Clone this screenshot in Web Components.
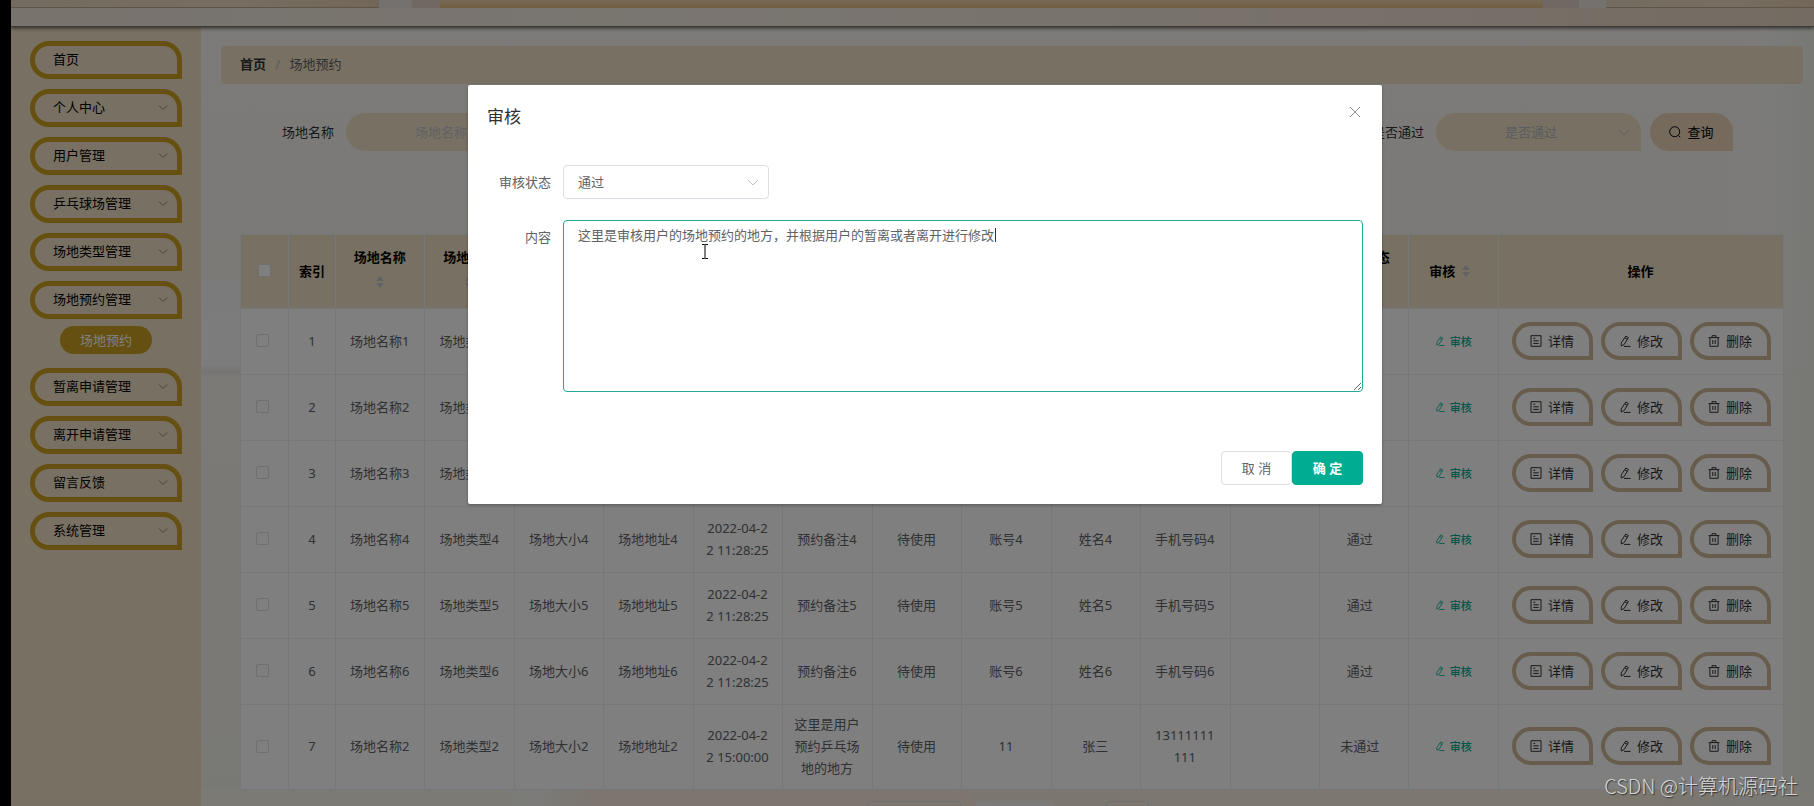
<!DOCTYPE html>
<html lang="zh-CN">
<head>
<meta charset="utf-8">
<title>场地预约</title>
<style>
html, body { height: 100%; margin: 0; }
body { background: #000; color: #606266; overflow: hidden; font: 13px/22px "Noto Sans", "Noto Sans CJK SC", sans-serif; }
</style>
</head>
<body>
<venue-app></venue-app>
<script>
const define = (name, html, init) => {
  const tpl = document.createElement('template');
  tpl.innerHTML = html;
  customElements.define(name, class extends HTMLElement {
    constructor() { super(); this.attachShadow({ mode: 'open' }).append(tpl.content.cloneNode(true)); }
    connectedCallback() { if (init) init(this, this.shadowRoot); }
  });
};

const icons = {
  down: '<path d="M1 4l5 5 5-5"/>',
  close: '<path d="M1 1l10 10M11 1L1 11"/>',
  search: '<circle cx="5.7" cy="5.7" r="5"/><path d="M9.6 9.6l1.6 1.7"/>',
  doc: '<path d="M1 .7h10v10.6H1zM3.3 3.3h2M3.3 5.8h5.4M3.3 8.4h5.4"/>',
  edit: '<path d="M6.8 1.1l2.6 1.4-4.2 7L2.3 11l-.1-3.1zM5.8 2.9l2.5 1.4M5 11.4h6.500"/>',
  trash: '<path d="M.6 2.6h10.8M4 2.4V.7h4v1.7M1.9 2.8v8.5h8.2V2.8M4.8 5v4M7.2 5v4"/>'
};
define('ui-icon', `<style>:host{display:inline-flex;width:12px;height:12px;flex:none}
svg{width:100%;height:100%;fill:none;stroke:currentColor;stroke-width:1}</style>
<svg viewBox="0 0 12 12" aria-hidden="true"></svg>`, (el, r) => {
  r.querySelector('svg').innerHTML = icons[el.getAttribute('name')];
});

define('app-header', `<style>
:host{display:block;position:relative;z-index:1;box-shadow:0 1px 4px #000a;border-bottom:1px solid #7c766c}
.band{display:grid;grid-template-columns:368px 33px 28px 1fr 36px 27px 208px;height:8px}
.wood{background:linear-gradient(90deg,#e8d8c0,#efdcc2 60%,#e4cdb0);border-bottom:1px solid #bcab94}
.glass{background:#e8e2dd}.fade{background:#e0d2c2}
.gold{background:linear-gradient(#ecd2ac,#e6bf83)}
.rail{height:18px;background:linear-gradient(90deg,#f0e6da,#f4ebe0 40%,#efe2d4 75%,#e9d8c4)}
</style><div class="band"><div class="wood"></div><div class="glass"></div><div class="fade"></div><div class="gold"></div><div class="fade"></div><div class="glass"></div><div class="wood"></div></div><div class="rail"></div>`);

define('menu-item', `<style>
:host{display:block}
button{display:flex;align-items:center;justify-content:space-between;box-sizing:border-box;width:100%;height:38px;
padding:0 9px 2px 18px;border:5px solid #caa022;border-radius:19px 19px 0 19px;background:none;font:inherit;color:#000}
ui-icon{color:#807a70;width:10px;height:10px}
:host([plain]) ui-icon{display:none}
</style><button type="button"><slot></slot><ui-icon name="down"></ui-icon></button>`);

define('side-menu', `<style>
:host{display:block;background:#f0e1c5;padding:14px 19px}
nav{display:flex;flex-direction:column;gap:10px}
a{align-self:center;margin:-3px 0 4px;padding:3px 20px;border-radius:14px;background:#caa022;color:#fff;text-decoration:none}
</style><nav>
<menu-item plain>首页</menu-item><menu-item>个人中心</menu-item><menu-item>用户管理</menu-item>
<menu-item>乒乓球场管理</menu-item><menu-item>场地类型管理</menu-item><menu-item>场地预约管理</menu-item>
<a href="#">场地预约</a>
<menu-item>暂离申请管理</menu-item><menu-item>离开申请管理</menu-item><menu-item>留言反馈</menu-item><menu-item>系统管理</menu-item>
</nav>`);

define('page-breadcrumb', `<style>
:host{display:flex;align-items:center;box-sizing:border-box;gap:9px;height:38px;padding:0 19px 2px;background:#f0e1c5;border-radius:4px}
a{color:#303133;font-weight:700;text-decoration:none}.sep{color:#c0c4cc;font-weight:700}
</style><a href="#">首页</a><span class="sep">/</span><span>场地预约</span>`);

define('search-bar', `<style>
:host{display:flex;align-items:center;padding:29px 70px 0 61px;height:38px;color:#303133}
input,select,button{box-sizing:border-box;height:38px;border:0;background:#f0e1c5;font:inherit;margin:0}
input,select{color:#b4b8c0;text-align:center;appearance:none}
input::placeholder{color:#c0c4cc;opacity:1}
input{width:190px;border-radius:19px 19px 0 19px;margin-left:12px}
.last{margin-left:auto}
.pick{position:relative;margin:0 9px 0 12px}
select{display:block;width:205px;padding:0 30px 0 15px;border-radius:19px 19px 0 19px}
.pick ui-icon{position:absolute;right:11px;top:13px;color:#b4b8c0}
button{display:flex;align-items:center;justify-content:center;gap:6px;width:83px;border-radius:19px 19px 0 19px;background:#ebd5b9;color:#000}
</style><label for="n">场地名称</label><input id="n" placeholder="场地名称">
<label for="p" class="last">是否通过</label><span class="pick"><select id="p"><option>是否通过</option></select><ui-icon name="down"></ui-icon></span>
<button type="button"><ui-icon name="search"></ui-icon>查询</button>`);

define('action-button', `<style>
:host{display:inline-flex}
button{display:flex;align-items:center;justify-content:center;gap:6px;box-sizing:border-box;width:81px;height:38px;padding:0;
border:4px solid #d0bb98;border-radius:19px 19px 0 19px;background:none;font:inherit;color:#303133}
</style><button type="button"><ui-icon></ui-icon><slot></slot></button>`, (el, r) => {
  const i = r.querySelector('ui-icon');
  i.setAttribute('name', el.getAttribute('icon'));
  i.replaceWith(i.cloneNode());
});

const heads = ['场地名称','场地类型','场地大小','场地地址','预约时间','预约备注','使用状态','账号','姓名','手机号码','审核回复','审核状态','审核'];
const rows = [1,2,3,4,5,6].map(n => [n,'场地名称'+n,'场地类型'+n,'场地大小'+n,'场地地址'+n,'2022-04-22 11:28:25','预约备注'+n,'待使用','账号'+n,'姓名'+n,'手机号码'+n,'','通过']);
rows.push([7,'场地名称2','场地类型2','场地大小2','场地地址2','2022-04-22 15:00:00','这里是用户预约乒乓场地的地方','待使用','11','张三','13111111111','','未通过']);
define('booking-table', `<style>
:host{display:block}
table{width:100%;table-layout:fixed;border-collapse:separate;border-spacing:0;border:solid #ebeef5;border-width:1px 0 0 1px;background:#fff;text-align:center}
th,td{box-sizing:border-box;border:solid #ebeef5;border-width:0 1px 1px 0;word-break:break-all}
th{height:74px;padding:0 12px 2px 11px;background:#f0e1c5;color:#000;font-weight:700}
td{height:66px;padding:8px 12px 10px 11px}
.c1{width:48px}.c2{width:47px}.ops{width:285px}
.h{display:flex;flex-wrap:wrap;justify-content:center;align-items:center}
.sort{display:flex;flex-direction:column;align-items:center;justify-content:center;gap:2px;width:22px;height:28px}
.sort::before,.sort::after{content:"";border:solid transparent;border-width:0 4px 5px;border-bottom-color:#c0c4cc}
.sort::after{border-width:5px 4px 0;border-top-color:#c0c4cc}
.narrow{padding-left:0;padding-right:0}
.state{padding-right:20px}
input{appearance:none;display:block;box-sizing:border-box;width:13px;height:13px;margin:0 auto;border:1px solid #dcdfe6;border-radius:2px;background:#fff}
td input{position:relative;right:2px}
.link{display:inline-flex;align-items:center;gap:5px;border:0;padding:0;background:none;color:#00ad93;font:500 11px/22px "Noto Sans CJK SC",sans-serif}
.link ui-icon{width:10px;height:10px}
.acts{display:flex;justify-content:center;gap:8px}
</style><table><thead><tr><th class="c1 narrow"><input type="checkbox" aria-label="全选"></th><th class="c2 narrow">索引</th></tr></thead><tbody></tbody></table>`, (el, r) => {
  r.querySelector('thead tr').insertAdjacentHTML('beforeend',
    heads.map(h => `<th><div class="h">${h}<span class="sort"></span></div></th>`).join('') + '<th class="ops">操作</th>');
  r.querySelector('tbody').innerHTML = rows.map(v => `<tr><td class="narrow"><input type="checkbox" aria-label="选择 ${v[0]}"></td>` +
    v.map((c, i) => `<td class="${i === 0 ? 'narrow' : i === 12 ? 'state' : ''}">${c}</td>`).join('') +
    `<td><button type="button" class="link"><ui-icon name="edit"></ui-icon>审核</button></td>
<td class="narrow"><div class="acts"><action-button icon="doc">详情</action-button><action-button icon="edit">修改</action-button><action-button icon="trash">删除</action-button></div></td></tr>`).join('');
});

define('page-pager', `<style>
:host{display:flex;justify-content:center;gap:15px;padding:11px 0 0;}
select,button,input{box-sizing:border-box;height:28px;margin:0;border:1px solid #dcdfe6;border-radius:3px;background:#fff0;font:inherit;appearance:none}
select{width:94px;padding:0 10px}button{width:78px;border:0;background:#f7f5f2}input{width:43px;margin-left:37px;text-align:center}
</style><select aria-label="每页条数"></select><button type="button" aria-label="第一页"></button><input aria-label="页码">`);

define('review-dialog', `<style>
:host{position:absolute;inset:0;z-index:2;display:flex;justify-content:center;align-items:flex-start;padding:85px 0 0 25px;background:#00000080}
section{box-sizing:border-box;width:914px;padding:20px 19px 19px;border-radius:2px;background:#fff;box-shadow:0 1px 3px #0000004d}
header{display:flex;justify-content:space-between;align-items:flex-start;height:60px}
h2{margin:0;font:400 17px/22px "Noto Sans CJK SC",sans-serif;color:#303133}
button{font:inherit}
.x{display:flex;padding:1px 2px;border:0;background:none;color:#909399}
form{display:grid;grid-template-columns:64px 1fr;column-gap:12px;row-gap:21px}
label{text-align:right;line-height:34px}
.pick{position:relative;width:206px}
select,textarea{box-sizing:border-box;width:100%;margin:0;font:inherit;color:#606266;background:none;border:1px solid #dcdfe6;border-radius:4px}
select{display:block;height:34px;padding:0 14px;appearance:none}
.pick ui-icon{position:absolute;right:10px;top:11px;color:#c0c4cc}
.text{position:relative}
textarea{display:block;height:172px;padding:3px 14px;border-color:#22ab9b;outline:0;resize:vertical;overflow:hidden}
.caret{position:absolute;left:432px;top:8px;width:1px;height:14px;background:#333}
.beam{position:absolute;left:138px;top:24px;width:8px;height:15px;fill:none;stroke:#000}
footer{display:flex;justify-content:flex-end;padding-top:59px}
footer button{box-sizing:border-box;width:71px;height:34px;padding:0;border:1px solid #dcdfe6;border-radius:4px;background:#fff;color:#606266}
footer .ok{border-color:#00ad93;background:#00ad93;color:#fff;font-weight:700}
</style><section role="dialog" aria-label="审核">
<header><h2>审核</h2><button type="button" class="x" aria-label="关闭"><ui-icon name="close"></ui-icon></button></header>
<form><label for="s">审核状态</label><div class="pick"><select id="s"><option>通过</option></select><ui-icon name="down"></ui-icon></div>
<label for="t">内容</label><div class="text"><textarea id="t">这里是审核用户的场地预约的地方，并根据用户的暂离或者离开进行修改</textarea><span class="caret"></span>
<svg class="beam" viewBox="0 0 8 15" aria-hidden="true"><path d="M1 .5h2.5l.5.5.5-.5H7M4 1v13M1 14.5h2.5l.5-.5.5.5H7"/></svg></div></form>
<footer><button type="button">取 消</button><button type="button" class="ok">确 定</button></footer></section>`);

define('venue-app', `<style>
:host{position:relative;display:flex;flex-direction:column;box-sizing:border-box;height:100vh;padding-left:11px;overflow:hidden}
.page{flex:1;position:relative;display:flex;flex-direction:column;overflow:hidden}
.body{flex:1;display:grid;grid-template-columns:190px 1fr;min-height:0}
main{display:flex;flex-direction:column;min-width:0;padding:19px 11px 0 20px;
background:linear-gradient(90deg,#0000 94%,#f9f9f780 97%,#f0f0ea),linear-gradient(#0000 252px,#f6f6f6 254px,#f8f8f8 300px,#f8f8f9 338px,#eae8e2 345px,#0000 350px),linear-gradient(#f8f6f2,#f6f4ee 40%,#f3f2e9)}
booking-table{margin:83px 19px 0 19px}
.foot{flex:1;margin:0 -11px 0 -20px;background:linear-gradient(90deg,#f6f4e8 18%,#f8f7f4 21%,#f6f2ea 22%,#f8ecdf 24%,#f8efdf 90%,#f4f2e8 96%)}
.mark{position:absolute;z-index:3;right:16px;bottom:5px;color:#d6d6d6;font:300 20px/30px "Noto Sans CJK SC",sans-serif;text-shadow:1px 1px 1px #333}
</style><div class="page"><app-header></app-header><div class="body"><side-menu></side-menu><main>
<page-breadcrumb></page-breadcrumb><search-bar></search-bar><booking-table></booking-table><div class="foot"><page-pager></page-pager></div></main></div>
<review-dialog></review-dialog></div><div class="mark">CSDN @计算机源码社</div>`);
</script>
</body>
</html>
